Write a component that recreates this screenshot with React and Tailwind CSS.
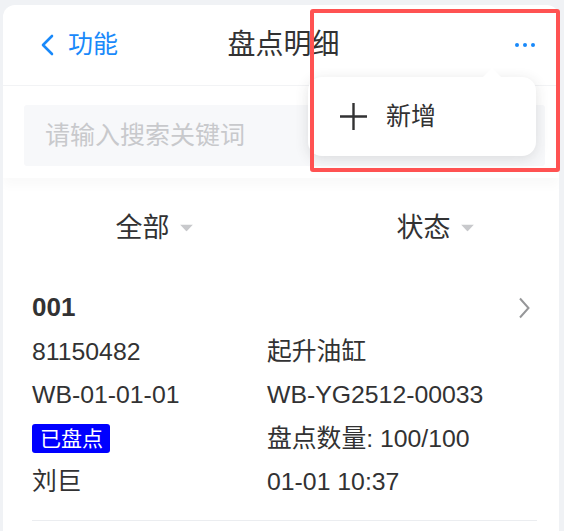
import React from 'react';

const rows = [
  ['81150482', '起升油缸'],
  ['WB-01-01-01', 'WB-YG2512-00033'],
  ['badge', '盘点数量: 100/100'],
  ['刘巨', '01-01 10:37'],
];

function Caret() {
  return (
    <svg width="13" height="7" viewBox="0 0 13 7" className="absolute right-[-23px] top-1/2 -translate-y-1/2">
      <path d="M0 0 L13 0 L6.5 7 Z" fill="#c8c9cc" />
    </svg>
  );
}

export default function App() {
  return (
    <div className="relative min-h-[531px] bg-[#f0f2f5] pt-[5px] pl-[3px] pr-[5px] font-['Liberation_Sans','Noto_Sans_CJK_SC',sans-serif] text-[#323233]">
      <div className="relative h-[526px] overflow-hidden rounded-t-[12px] bg-white">
        {/* nav bar */}
        <div className="flex h-[81px] items-center border-b border-[#f2f3f5]">
          <div className="flex flex-1 items-center gap-[14px] pl-[37px] text-[25px] text-[#1989fa]">
            <svg width="14" height="22" viewBox="0 0 14 22">
              <path d="M12 2 L3 11 L12 20" fill="none" stroke="#1989fa" strokeWidth="2.6" strokeLinecap="round" strokeLinejoin="round" />
            </svg>
            <span>功能</span>
          </div>
          <div className="mr-[8px] text-[28px]">盘点明细</div>
          <div className="flex flex-1 justify-end gap-[4px] pr-[24px]">
            <span className="h-[4px] w-[4px] rounded-full bg-[#1989fa]" />
            <span className="h-[4px] w-[4px] rounded-full bg-[#1989fa]" />
            <span className="h-[4px] w-[4px] rounded-full bg-[#1989fa]" />
          </div>
        </div>

        {/* search */}
        <div className="relative z-10 bg-white pt-[19px] pb-[12px] shadow-[0_8px_10px_rgba(0,0,0,0.025)]">
          <div className="ml-[21px] mr-[14px] flex h-[61px] items-center rounded-[3px] bg-[#f7f8fa] pl-[21px] text-[25px] text-[#c8c9cc]">
            请输入搜索关键词
          </div>
        </div>

        {/* filters */}
        <div className="flex h-[100px] items-center text-[27px]">
          <div className="flex flex-1 justify-center pl-[4px]">
            <span className="relative">
              全部
              <Caret />
            </span>
          </div>
          <div className="flex flex-1 justify-center pl-[10px]">
            <span className="relative">
              状态
              <Caret />
            </span>
          </div>
        </div>

        {/* item */}
        <div className="pt-[8px] pl-[29px] text-[24.8px] leading-[43.5px]">
          <div className="flex items-center justify-between pr-[29px]">
            <span className="text-[26px] font-bold">001</span>
            <svg width="12" height="22" viewBox="0 0 12 22">
              <path d="M2 1.5 L10.5 11 L2 20.5" fill="none" stroke="#969799" strokeWidth="2" />
            </svg>
          </div>
          {rows.map(([a, b], i) => (
            <div key={i} className="grid grid-cols-[235px_1fr]">
              <div className="flex items-center">
                {a === 'badge' ? (
                  <span className="inline-block h-[29px] w-[78px] rounded-[3px] bg-[#0000ff] pl-[8px] text-[21px] leading-[29px] text-white">
                    已盘点
                  </span>
                ) : (
                  a
                )}
              </div>
              <div>{b}</div>
            </div>
          ))}
          <div className="mt-[16px] mr-[22px] border-b border-[#ebedf0]" />
        </div>

        {/* popover */}
        <div className="absolute left-[305px] top-[72px] z-20 flex h-[79px] w-[228px] items-center rounded-[14px] bg-white pl-[31px] shadow-[0_3px_14px_rgba(50,50,51,0.14)]">
          <svg className="absolute left-[174px] top-[-10px]" width="20" height="11" viewBox="0 0 20 11">
            <path d="M0 11 L10 1 L20 11 Z" fill="white" />
          </svg>
          <svg width="29" height="29" viewBox="0 0 29 29">
            <path d="M14.5 1 V28 M1 14.5 H28" stroke="#323233" strokeWidth="2.4" />
          </svg>
          <span className="ml-[18px] text-[25px]">新增</span>
        </div>
      </div>

      {/* annotation box */}
      <div className="pointer-events-none absolute left-[310px] top-[9px] z-30 h-[163px] w-[250px] rounded-[3px] border-[4px] border-[#ff5252]" />
    </div>
  );
}
